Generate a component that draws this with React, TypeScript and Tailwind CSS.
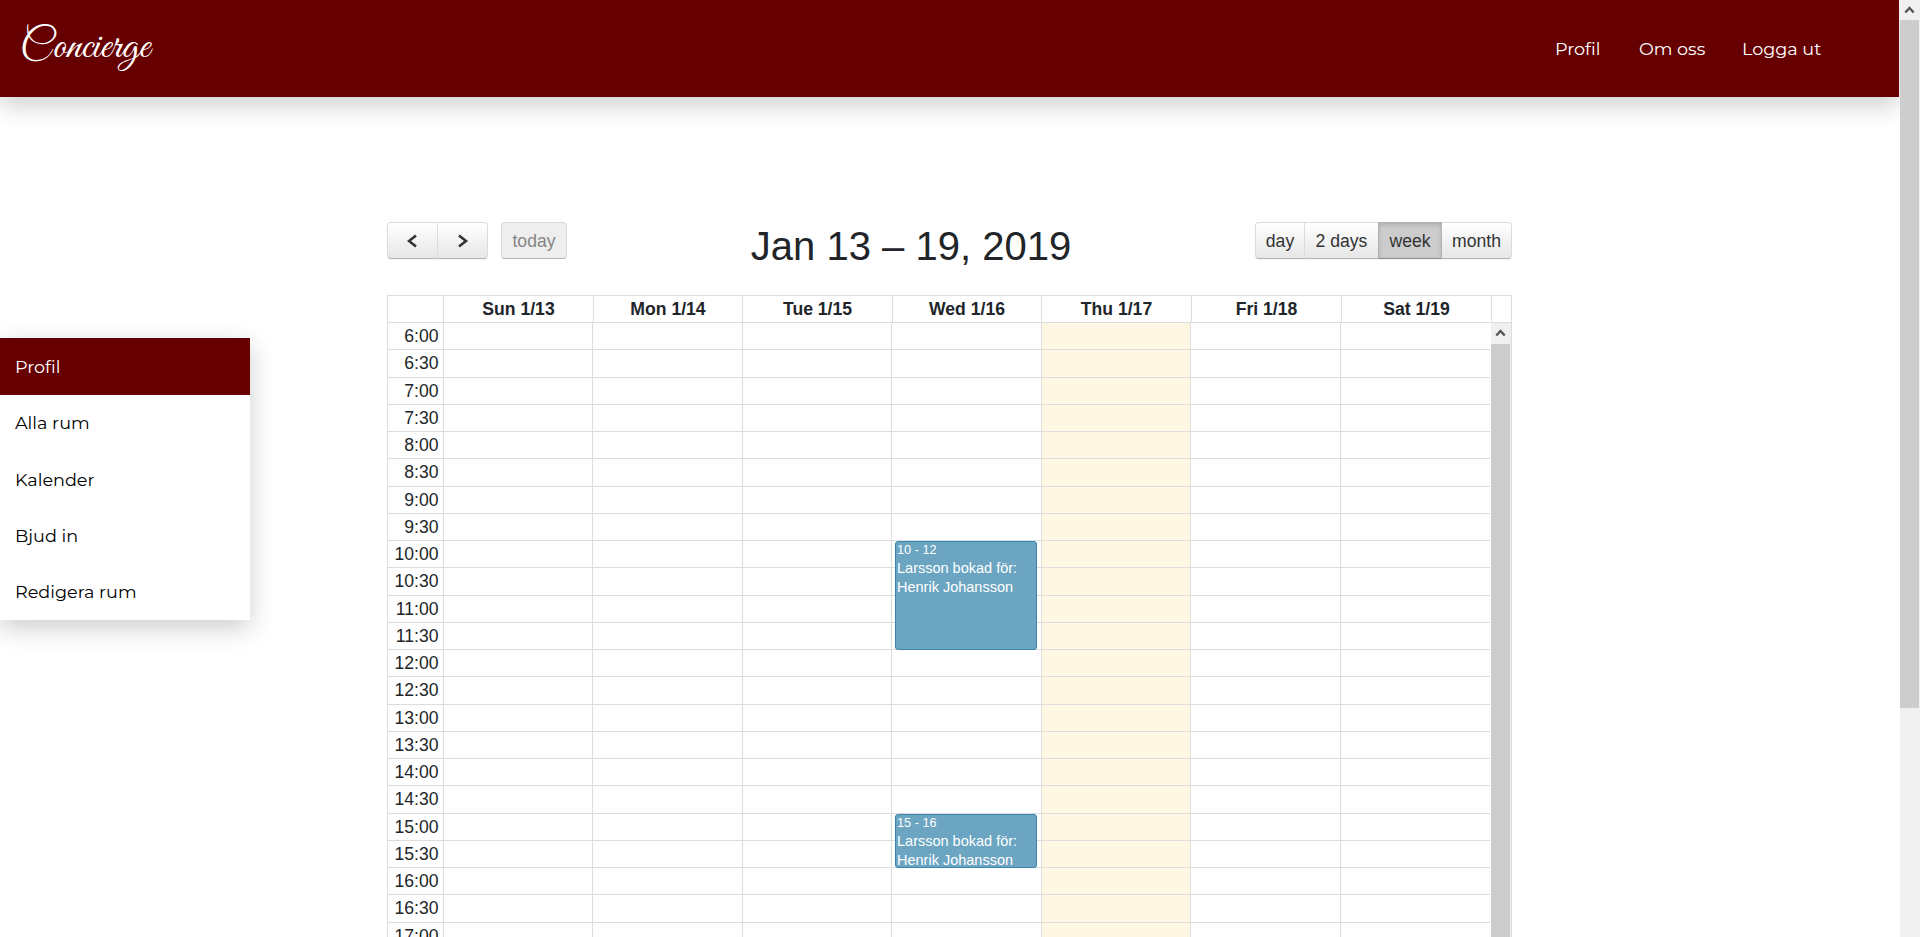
import React from "react";

const navLinks = [
  { label: "Profil", style: "w-[84px]" },
  { label: "Om oss", style: "w-[103px]" },
  { label: "Logga ut", style: "w-[157px]" },
];

const menu = ["Profil", "Alla rum", "Kalender", "Bjud in", "Redigera rum"];

const days = ["Sun 1/13", "Mon 1/14", "Tue 1/15", "Wed 1/16", "Thu 1/17", "Fri 1/18", "Sat 1/19"];

const slots = Array.from({ length: 23 }, (_, i) => `${6 + Math.floor(i / 2)}:${i % 2 ? "30" : "00"}`);

const events = [
  { time: "10 - 12", style: "top-[219px] h-[109px]" },
  { time: "15 - 16", style: "top-[492px] h-[54px]" },
];

const buttonBase = "flex h-full items-center justify-center border-[#dcdcdc] border-b-[#b4b4b4]";
const buttonFace = "bg-linear-to-b from-white to-[#e6e6e6]";

function ScrollArrow() {
  return (
    <svg width="20" height="20" viewBox="0 0 20 20" fill="none" stroke="#555" strokeWidth="2.4">
      <path d="M5.3 12.5 L9.5 8 L13.7 12.5" />
    </svg>
  );
}

function Chevron({ d }: { d: string }) {
  return (
    <svg width="12" height="16" viewBox="0 0 12 16" fill="none" stroke="#333" strokeWidth="2.6">
      <path d={d} />
    </svg>
  );
}

function Header() {
  return (
    <header className="flex h-[97px] w-[1899px] shrink-0 items-center justify-between bg-[#660000] text-white shadow-[0_8px_24px_rgba(0,0,0,0.2)]">
      <a className="block pb-[1px] pl-[20px] font-['Great_Vibes','Liberation_Serif',serif] text-[42.5px] leading-[60px]">Concierge</a>
      <nav className="flex pt-[2px] font-['Montserrat','Inter',sans-serif] text-[17.6px]">
        {navLinks.map((l) => (
          <a key={l.label} className={`block ${l.style}`}>{l.label}</a>
        ))}
      </nav>
    </header>
  );
}

function Sidebar() {
  return (
    <aside className="mt-[241px] flex h-[282px] w-[250px] shrink-0 flex-col bg-white font-['Montserrat','Inter',sans-serif] text-[17.6px] text-black shadow-[0_8px_24px_rgba(0,0,0,0.2)]">
      {menu.map((m, i) => (
        <a key={m} className={`flex items-center pl-[15px] ${i === 0 ? "h-[57px] bg-[#660000] pt-px text-white" : "h-[56.25px]"} ${i === 2 || i === 3 ? "pt-px" : ""}`}>{m}</a>
      ))}
    </aside>
  );
}

function Toolbar() {
  return (
    <div className="flex h-[73px] shrink-0 items-start justify-between text-[17.6px] text-[#333]">
      <div className="flex h-[37px] w-[180px] gap-[13px] leading-[20px]">
        <div className="flex w-[101px] rounded shadow-[0_1px_2px_rgba(0,0,0,0.05)]">
          <button className={`${buttonBase} ${buttonFace} w-[51px] rounded-l border`}><Chevron d="M9 2.5 L2 8 L9 13.5" /></button>
          <button className={`${buttonBase} ${buttonFace} w-[50px] rounded-r border border-l-0`}><Chevron d="M2 2.5 L9 8 L2 13.5" /></button>
        </div>
        <button className={`${buttonBase} w-[66px] rounded border bg-[#eee] pt-px text-[#858585]`}>today</button>
      </div>
      <h2 className="pt-[2px] text-[40px] leading-[44px] text-[#212529]">Jan 13 – 19, 2019</h2>
      <div className="flex h-[37px] w-[257px] rounded shadow-[0_1px_2px_rgba(0,0,0,0.05)]">
        <button className={`${buttonBase} ${buttonFace} w-[49px] rounded-l border border-r-0 pt-px`}>day</button>
        <button className={`${buttonBase} ${buttonFace} w-[74px] border border-r-0 pt-px`}>2 days</button>
        <button className="flex h-full w-[64px] items-center justify-center border border-[#b2b2b2] border-b-[#8c8c8c] bg-[#ccc] pt-px shadow-[inset_0_2px_4px_rgba(0,0,0,0.15)]">week</button>
        <button className={`${buttonBase} ${buttonFace} w-[70px] rounded-r border border-l-0 pt-px`}>month</button>
      </div>
    </div>
  );
}

function Calendar() {
  return (
    <div className="min-h-0 flex-1 text-[17.6px] text-[#212529]">
      <div className="grid h-[27px] grid-cols-[56px_150px_149px_150px_149px_150px_150px_150px_21px] border-t border-r border-[#ddd] text-center font-bold leading-[26px]">
        <div className="border-l border-[#ddd]" />
        {days.map((d) => (
          <div key={d} className="border-l border-[#ddd]">{d}</div>
        ))}
        <div className="border-l border-[#ddd]" />
      </div>
      <div className="grid grid-cols-[56px_149px_150px_149px_150px_149px_150px_151px_20px_1px]">
        <div className="border-l border-[#ddd]">
          {slots.map((s) => (
            <div key={s} className="h-[27.25px] border-t border-[#ddd] pr-[4.5px] text-right leading-[26px]">{s}</div>
          ))}
        </div>
        {days.map((d, i) => (
          <div key={d} className={`relative border-l border-[#ddd] ${i === 4 ? "bg-[#fdf7e3]" : ""} ${i === 6 ? "mr-px" : ""}`}>
            {slots.map((s) => (
              <div key={s} className="h-[27.25px] border-t border-[#ddd]" />
            ))}
            {i === 3 &&
              events.map((e) => (
                <div key={e.time} className={`absolute left-[3px] w-[142px] overflow-hidden rounded-[3px] border border-[#3a87ad] bg-[#6ba5c2] px-[1px] text-white ${e.style}`}>
                  <div className="h-[17px] text-[12.7px] leading-[16px]">{e.time}</div>
                  <div className="text-[14.5px] leading-[19px]">Larsson bokad för: Henrik Johansson</div>
                </div>
              ))}
          </div>
        ))}
        <div className="flex flex-col border-t border-[#ddd] bg-[#f0f0f0]">
          <div className="h-[21px]"><ScrollArrow /></div>
          <div className="w-[19px] flex-1 bg-[#cdcdcd]" />
        </div>
        <div className="bg-[#ddd]" />
      </div>
    </div>
  );
}

export default function App() {
  return (
    <div className="flex h-[937px] w-[1920px] overflow-hidden bg-white font-['Liberation_Sans',Arial,sans-serif]">
      <div className="flex w-[1900px] flex-col">
        <Header />
        <div className="flex min-h-0 flex-1">
          <Sidebar />
          <main className="ml-[137px] flex w-[1125px] flex-col pt-[125px]">
            <Toolbar />
            <Calendar />
          </main>
        </div>
      </div>
      <div className="flex w-[20px] flex-col bg-[#f0f0f0]">
        <div className="h-[20px]"><ScrollArrow /></div>
        <div className="h-[688px] w-[19px] bg-[#cdcdcd]" />
      </div>
    </div>
  );
}
